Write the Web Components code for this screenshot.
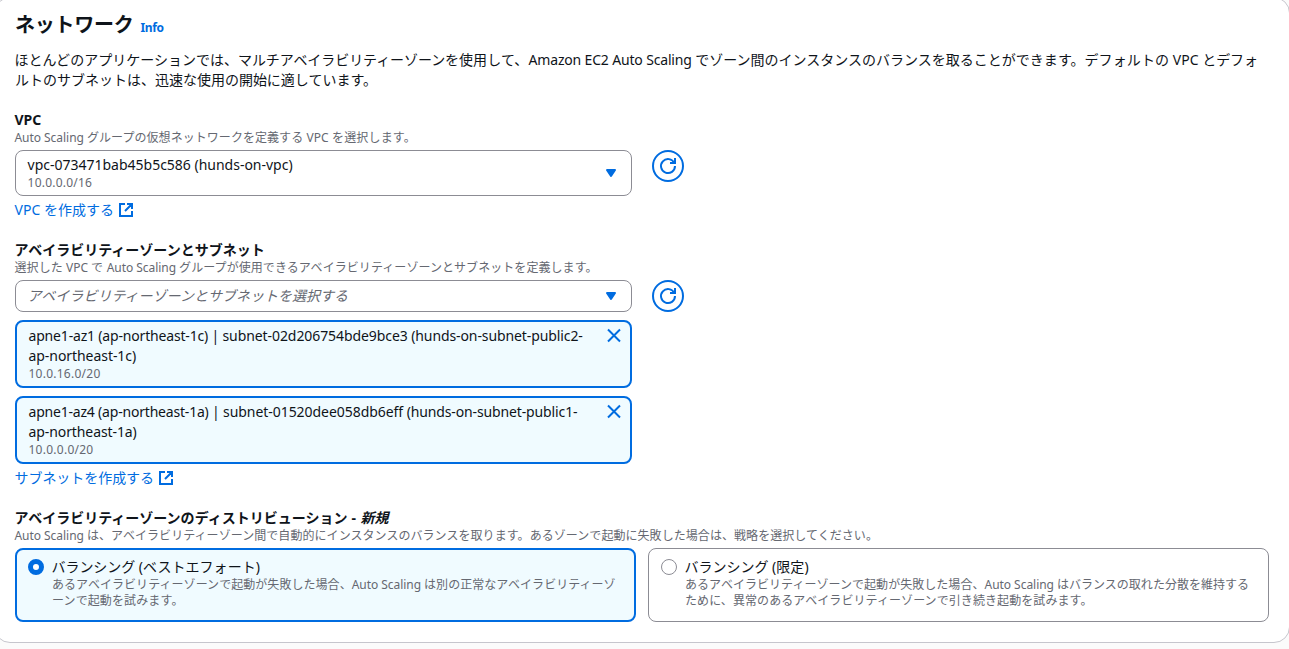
<!DOCTYPE html>
<html lang="ja">
<head>
<meta charset="utf-8">
<title>ネットワーク</title>
<style>
html, body { height: 100%; }
body {
  margin: 0; overflow: hidden; background: #fbfbfb; color: #0f141a;
  font: 14px/20px "Noto Sans", "Noto Sans CJK JP", sans-serif;
  --blue: #006ce0; --muted: #656871; --line: #8c8c94; --tint: #f0fbff;
}
</style>
</head>
<body>
<network-panel></network-panel>
<script>
const define = (name, html, ready) => customElements.define(name, class extends HTMLElement {
  connectedCallback() {
    if (this.shadowRoot) return;
    const t = document.createElement('template');
    t.innerHTML = html;
    this.attachShadow({ mode: 'open' }).append(t.content.cloneNode(true));
    if (ready) ready(this);
  }
});

/* A run of text that is tracked to a given advance width. */
define('text-run', `<style>:host{display:inline;white-space:pre}</style><slot></slot>`, el => {
  const fit = () => {
    const w = parseFloat(el.getAttribute('w'));
    el.style.letterSpacing = '0px';
    const natural = el.getBoundingClientRect().width;
    if (w && natural) el.style.letterSpacing = (w - natural) / [...el.textContent].length + 'px';
  };
  requestAnimationFrame(fit);
  fit();
});

const icons = {
  external: '<path d="M9 2h5v5M7 9l6.5-6.5M7 2H2v12h12V9"/>',
  refresh: '<path d="M10 5h5V0"/><path d="M15 8a7 7 0 1 1-.7-3"/>',
  close: '<path d="m2 1.5 12 12M14 1.5l-12 12"/>',
  caret: '<path d="M4 5h8l-4 6z" fill="currentColor" stroke-linejoin="round"/>'
};
define('ui-icon', `<style>:host{display:block;flex:none;width:16px;height:16px;color:var(--blue)}
svg{display:block;overflow:visible;fill:none;stroke:currentColor;stroke-width:2}</style>
<svg width="16" height="16" viewBox="0 0 16 16"></svg>`, el => {
  el.shadowRoot.querySelector('svg').innerHTML = icons[el.getAttribute('name')];
});

define('panel-heading', `<style>:host{display:flex;align-items:baseline;height:24px;line-height:24px;gap:7px}
h2{margin:0;font-size:20px;line-height:24px;font-weight:700}
a{font-size:12px;font-weight:700;color:var(--blue)}</style>
<h2><slot></slot></h2><a><slot name="info"></slot></a>`);

define('form-field', `<style>:host{display:block;margin-top:20px}
.l,.d{text-indent:-.6px}
.l{font-weight:700;height:20px;white-space:nowrap}
.d{font-size:12px;line-height:16px;color:var(--muted);white-space:nowrap;margin-bottom:4px}</style>
<div class="l"><slot name="label"></slot></div><div class="d"><slot name="hint"></slot></div><slot></slot>`);

define('control-row', `<style>:host{display:flex;align-items:flex-start;gap:20px}</style><slot></slot>`);

define('select-box', `<style>:host{box-sizing:border-box;display:flex;align-items:center;width:617px;padding:4px 12px;
border:1px solid var(--line);border-radius:8px;background:#fff}
.v{flex:1;min-height:20px;padding:1px 0;white-space:nowrap;text-indent:-.4px}
:host([placeholder]) .v{color:var(--muted);font-style:italic}
.s{display:block;font-size:12px;line-height:16px;color:var(--muted)}
:host([two]) .v{padding:0}</style>
<div class="v"><slot></slot><span class="s"><slot name="sub"></slot></span></div><ui-icon name="caret"></ui-icon>`);

define('refresh-button', `<style>:host{box-sizing:border-box;display:grid;place-items:center;width:32px;height:32px;
border:2px solid var(--blue);border-radius:50%}</style><ui-icon name="refresh"></ui-icon>`);

define('create-link', `<style>:host{display:flex;align-items:center;gap:4px;height:20px;margin-top:4px;color:var(--blue);white-space:nowrap;text-indent:-.5px}</style>
<span><slot></slot></span><ui-icon name="external"></ui-icon>`);

define('subnet-token', `<style>:host{box-sizing:border-box;display:flex;width:617px;height:68px;margin-top:8px;padding:4px 8px 4px 11.5px;
border:2px solid var(--blue);border-radius:8px;background:var(--tint)}
.b{flex:1;white-space:nowrap}.s{font-size:12px;line-height:16px;color:var(--muted)}
ui-icon{margin-top:2px}</style>
<div class="b"><slot></slot><div class="s"><slot name="sub"></slot></div></div><ui-icon name="close"></ui-icon>`);

define('radio-tile', `<style>:host{box-sizing:border-box;display:flex;gap:8px;height:74px;padding:8px 12px;
border:1px solid var(--line);border-radius:8px;background:#fff}
:host([checked]){padding:7px 11px;border:2px solid var(--blue);background:var(--tint)}
i{box-sizing:border-box;flex:none;width:16px;height:16px;margin-top:2px;border:1px solid var(--line);border-radius:50%;background:#fff}
:host([checked]) i{border:5px solid var(--blue)}
.t{white-space:nowrap;text-indent:-.5px}.d{font-size:12px;line-height:16px;color:var(--muted);white-space:nowrap}</style>
<i></i><div><div class="t"><slot></slot></div><div class="d"><slot name="desc"></slot></div></div>`);

define('network-panel', `<style>
:host{box-sizing:border-box;display:block;width:1296px;height:646px;margin:-3px 0 0 -6px;padding:15px 20px 0;
border:1px solid #c6c6cd;border-radius:16px;background:#fff}
p{margin:13px 0 0;white-space:nowrap;text-indent:-.5px}
.tiles{display:grid;grid-template-columns:1fr 1fr;gap:12px}
</style>
<panel-heading><text-run w="118.5">ネットワーク</text-run><text-run slot="info" w="23">Info</text-run></panel-heading>
<p><text-run w="223.5">ほとんどのアプリケーションでは、</text-run><text-run w="221">マルチアベイラビリティーゾーンを</text-run><text-run w="69.5">使用して、</text-run><text-run w="166.7">Amazon EC2 Auto Scaling </text-run><text-run w="389.3">でゾーン間のインスタンスのバランスを取ることができます。</text-run><text-run w="88.3">デフォルトの </text-run><text-run w="29.5">VPC </text-run><text-run w="55.5">とデフォ</text-run><br><text-run w="362">ルトのサブネットは、迅速な使用の開始に適しています。</text-run></p>

<form-field>
  <text-run slot="label" w="27">VPC</text-run>
  <span slot="hint"><text-run w="72.6">Auto Scaling </text-run><text-run w="219.4">グループの仮想ネットワークを定義する </text-run><text-run w="25.6">VPC </text-run><text-run w="84">を選択します。</text-run></span>
  <control-row>
    <select-box two><text-run w="265">vpc-073471bab45b5c586 (hunds-on-vpc)</text-run><text-run slot="sub" w="64.5">10.0.0.0/16</text-run></select-box>
    <refresh-button></refresh-button>
  </control-row>
  <create-link><text-run w="29.5">VPC </text-run><text-run w="70">を作成する</text-run></create-link>
</form-field>

<form-field>
  <text-run slot="label" w="250.3">アベイラビリティーゾーンとサブネット</text-run>
  <span slot="hint"><text-run w="51.7">選択した </text-run><text-run w="24.9">VPC </text-run><text-run w="15.7">で </text-run><text-run w="72.4">Auto Scaling </text-run><text-run w="418.5">グループが使用できるアベイラビリティーゾーンとサブネットを定義します。</text-run></span>
  <control-row>
    <select-box placeholder><text-run w="320.5">アベイラビリティーゾーンとサブネットを選択する</text-run></select-box>
    <refresh-button></refresh-button>
  </control-row>
  <subnet-token><text-run w="194">apne1-az1 (ap-northeast-1c) | </text-run><text-run w="188.7">subnet-02d206754bde9bce3 </text-run><text-run w="171.5">(hunds-on-subnet-public2-</text-run><br><text-run w="107.6">ap-northeast-1c)</text-run><text-run slot="sub" w="72">10.0.16.0/20</text-run></subnet-token>
  <subnet-token><text-run w="194.5">apne1-az4 (ap-northeast-1a) | </text-run><text-run w="183.7">subnet-01520dee058db6eff </text-run><text-run w="170.7">(hunds-on-subnet-public1-</text-run><br><text-run w="108.2">ap-northeast-1a)</text-run><text-run slot="sub" w="65">10.0.0.0/20</text-run></subnet-token>
  <create-link><text-run w="139.5">サブネットを作成する</text-run></create-link>
</form-field>

<form-field>
  <span slot="label"><text-run w="333">アベイラビリティーゾーンのディストリビューション</text-run><text-run w="13"> - </text-run><em><text-run w="28">新規</text-run></em></span>
  <span slot="hint"><text-run w="72.6">Auto Scaling </text-run><text-run w="791">は、アベイラビリティーゾーン間で自動的にインスタンスのバランスを取ります。あるゾーンで起動に失敗した場合は、戦略を選択してください。</text-run></span>
  <div class="tiles">
    <radio-tile checked><text-run w="87.3">バランシング </text-run><text-run w="121.2">(ベストエフォート)</text-run>
      <span slot="desc"><text-run w="299.7">あるアベイラビリティーゾーンで起動が失敗した場合、</text-run><text-run w="72.4">Auto Scaling </text-run><text-run w="191.5">は別の正常なアベイラビリティーゾ</text-run><br><text-run w="131.5">ーンで起動を試みます。</text-run></span>
    </radio-tile>
    <radio-tile><text-run w="87.6">バランシング </text-run><text-run w="36.5">(限定)</text-run>
      <span slot="desc"><text-run w="299.5">あるアベイラビリティーゾーンで起動が失敗した場合、</text-run><text-run w="72.5">Auto Scaling </text-run><text-run w="192">はバランスの取れた分散を維持する</text-run><br><text-run w="407.5">ために、異常のあるアベイラビリティーゾーンで引き続き起動を試みます。</text-run></span>
    </radio-tile>
  </div>
</form-field>`);
</script>
</body>
</html>
